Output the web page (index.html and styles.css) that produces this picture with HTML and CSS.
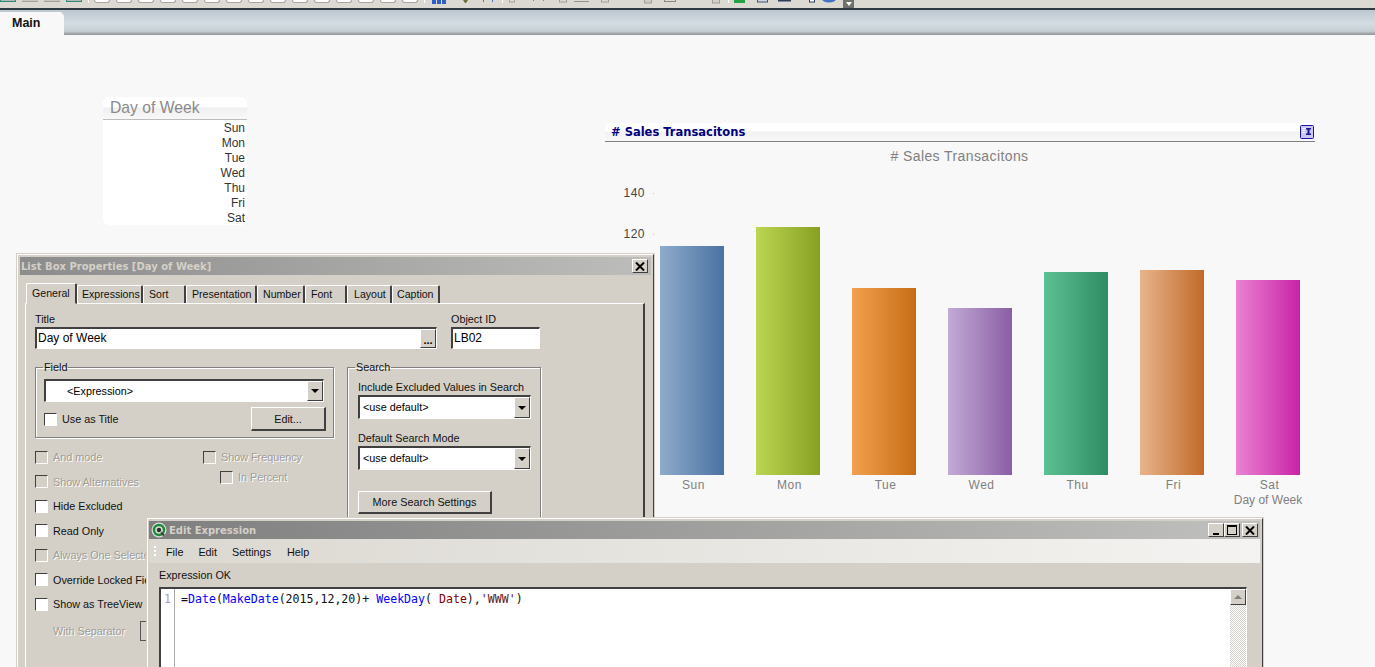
FILE: index.html
```html
<!DOCTYPE html>
<html lang="en">
<head>
<meta charset="utf-8">
<title>QlikView</title>
<link rel="stylesheet" href="styles.css">
</head>
<body>
<div class="toolbar">
  <i class="tb tb-teal"></i><i class="tb tb-gray"></i><i class="tb tb-gray"></i><i class="tb tb-teal"></i><i class="tb-sep"></i>
  <div class="tb-round-group">
    <i class="tb-round"></i><i class="tb-round"></i><i class="tb-round"></i><i class="tb-round"></i><i class="tb-round"></i>
    <i class="tb-round"></i><i class="tb-round"></i><i class="tb-round"></i><i class="tb-round"></i><i class="tb-round"></i>
    <i class="tb-round"></i><i class="tb-round"></i><i class="tb-round"></i><i class="tb-round"></i><i class="tb-round"></i>
  </div>
  <i class="tb-sep"></i>
  <svg class="tb-misc" width="412" height="8" viewBox="0 0 412 8" aria-hidden="true">
    <path d="M1 0h4v4H1zM6 0h4v4H6zM11 0h4v4h-4z" fill="#2f5fc4"/>
    <path d="M32 0h5l-2 3h-1z" fill="#6d6a3c"/>
    <path d="M52 0h1v2h-1zM61 0h1v2h-1z" fill="#4c78c0"/>
    <path d="M71 0h1v3h-1z" fill="#fff"/>
    <rect x="78.500" y="-1" width="5" height="3" fill="none" stroke="#a9a69e"/>
    <path d="M102 0h1v1h-1zM112 0h1v1h-1z" fill="#8a8780"/>
    <rect x="128.500" y="-1" width="7" height="3" fill="none" stroke="#a09d96"/>
    <path d="M143 1h15v1h-15z" fill="#77746e" fill-opacity=".7"/>
    <rect x="170.500" y="-1" width="7" height="3" fill="none" stroke="#a09d96"/>
    <rect x="213.500" y="-1" width="7" height="4" fill="#d0cdc6" stroke="#a09d96"/>
    <path d="M233 0h1v2h-1zM244 0h1v2h-1zM233 1h12v1h-12z" fill="#8a8780"/>
    <rect x="281.500" y="-1" width="7" height="4" fill="#d4d0c8" stroke="#a09d96"/>
    <path d="M297 0h1v3h-1z" fill="#fff"/>
    <rect x="303" y="0" width="11" height="3" fill="#23a345"/>
    <rect x="326.500" y="-1" width="10" height="3" fill="#cfd5dc" stroke="#40556e"/>
    <rect x="347.500" y="-1" width="12" height="2" fill="#2c3f5c" stroke="#2c3f5c"/>
    <rect x="378.500" y="-1" width="5" height="3" fill="#fff" stroke="#29406a"/>
    <ellipse cx="398" cy="-1" rx="7" ry="3.500" fill="#3f73c4"/>
  </svg>
  <div class="tb-more"><i class="tb-more-arrow"></i></div>
</div>
<div class="tabstrip"><div class="tab-main">Main</div></div>

<main class="sheet">
  <section class="listbox">
    <h2 class="listbox-title">Day of Week</h2>
    <ul class="listbox-items">
      <li>Sun</li><li>Mon</li><li>Tue</li><li>Wed</li><li>Thu</li><li>Fri</li><li>Sat</li>
    </ul>
  </section>

  <section class="chart">
    <header class="chart-caption">
      <h2 class="chart-caption-text"># Sales Transacitons</h2>
      <svg class="sigma" width="14" height="14" viewBox="0 0 14 14" aria-hidden="true">
        <rect x=".5" y=".5" width="13" height="13" rx="1" fill="#c9c9ef" stroke="#1a12b0"/>
        <path d="M2 3h4v1H2zM2 5h3v1H2zM2 7h3v1H2z" fill="#f1f1ff"/>
        <path d="M6 3h5v1.500H9.500v4H11V10H6V8.500h1.500v-4H6z" fill="#1a12a0"/>
      </svg>
    </header>
    <h3 class="chart-title"># Sales Transacitons</h3>
    <div class="chart-plot">
      <span class="axis-label axis-140">140</span><i class="axis-dot dot-140"></i>
      <span class="axis-label axis-120">120</span><i class="axis-dot dot-120"></i>
      <div class="bars">
        <div class="bar-col"><div class="bar bar-sun"></div><span class="bar-label">Sun</span></div>
        <div class="bar-col"><div class="bar bar-mon"></div><span class="bar-label">Mon</span></div>
        <div class="bar-col"><div class="bar bar-tue"></div><span class="bar-label">Tue</span></div>
        <div class="bar-col"><div class="bar bar-wed"></div><span class="bar-label">Wed</span></div>
        <div class="bar-col"><div class="bar bar-thu"></div><span class="bar-label">Thu</span></div>
        <div class="bar-col"><div class="bar bar-fri"></div><span class="bar-label">Fri</span></div>
        <div class="bar-col"><div class="bar bar-sat"></div><span class="bar-label">Sat</span></div>
      </div>
      <div class="x-title">Day of Week</div>
    </div>
  </section>
</main>

<section class="win win-props">
  <header class="titlebar titlebar-props">
    <span class="title-text">List Box Properties [Day of Week]</span>
    <span class="cap-btn cap-close"><svg class="x-glyph" width="10" height="9" viewBox="0 0 10 9"><path d="M1 .5l8 8M9 .5l-8 8"/></svg></span>
  </header>
  <div class="tabs">
    <span class="ptab ptab-active w-general">General</span>
    <span class="ptab w-expr">Expressions</span>
    <span class="ptab w-sort">Sort</span>
    <span class="ptab w-pres">Presentation</span>
    <span class="ptab w-num">Number</span>
    <span class="ptab w-font">Font</span>
    <span class="ptab w-layout">Layout</span>
    <span class="ptab w-caption">Caption</span>
  </div>
  <div class="panel">
    <div class="row-title">
      <div class="col-title">
        <label class="lbl">Title</label>
        <div class="sunken title-input"><span class="input-val">Day of Week</span><span class="dots-btn">...</span></div>
      </div>
      <div class="col-objid">
        <label class="lbl">Object ID</label>
        <div class="sunken objid-input"><span class="input-val">LB02</span></div>
      </div>
    </div>
    <div class="row-main">
      <div class="col-left">
        <fieldset class="group group-field">
          <legend>Field</legend>
          <div class="sunken combo combo-field"><span class="combo-val indent">&lt;Expression&gt;</span><span class="combo-btn"><i class="arrow"></i></span></div>
          <div class="field-foot">
            <span class="chk-row"><i class="chk"></i>Use as Title</span>
            <span class="btn btn-edit">Edit...</span>
          </div>
        </fieldset>
        <div class="options">
          <div class="opt-col opt-col-a">
            <span class="chk-row dis"><i class="chk chk-dis"></i>And mode</span>
            <span class="chk-row dis"><i class="chk chk-dis"></i>Show Alternatives</span>
            <span class="chk-row"><i class="chk"></i>Hide Excluded</span>
            <span class="chk-row"><i class="chk"></i>Read Only</span>
            <span class="chk-row dis"><i class="chk chk-dis"></i>Always One Selected Value</span>
            <span class="chk-row"><i class="chk"></i>Override Locked Field</span>
            <span class="chk-row"><i class="chk"></i>Show as TreeView</span>
            <span class="sep-row dis"><span class="sep-label">With Separator</span><i class="sep-input"></i></span>
          </div>
          <div class="opt-col opt-col-b">
            <span class="chk-row dis"><i class="chk chk-dis"></i>Show Frequency</span>
            <span class="chk-row dis sub"><i class="chk chk-dis"></i>In Percent</span>
          </div>
        </div>
      </div>
      <fieldset class="group group-search">
        <legend>Search</legend>
        <div class="lbl">Include Excluded Values in Search</div>
        <div class="sunken combo combo-search"><span class="combo-val">&lt;use default&gt;</span><span class="combo-btn"><i class="arrow"></i></span></div>
        <div class="lbl lbl-mode">Default Search Mode</div>
        <div class="sunken combo combo-search"><span class="combo-val">&lt;use default&gt;</span><span class="combo-btn"><i class="arrow"></i></span></div>
        <span class="btn btn-more">More Search Settings</span>
      </fieldset>
    </div>
  </div>
</section>

<section class="win win-expr">
  <header class="titlebar titlebar-expr">
    <svg class="qv-logo" width="16" height="16" viewBox="0 0 16 16" aria-hidden="true">
      <circle cx="8" cy="8" r="7.500" fill="#d9ddd6"/>
      <circle cx="8" cy="8" r="5" fill="none" stroke="#1f8a3a" stroke-width="2.400"/>
      <circle cx="8" cy="8" r="2.200" fill="#2e2e2e"/>
      <path d="M10 10.500l3 3" stroke="#3d3d3d" stroke-width="2"/>
    </svg>
    <span class="title-text">Edit Expression</span>
    <span class="cap-group">
      <span class="cap-btn"><i class="cap-min"></i></span>
      <span class="cap-btn"><i class="cap-max"></i></span>
      <span class="cap-btn cap-x"><svg class="x-glyph" width="10" height="9" viewBox="0 0 10 9"><path d="M1 .5l8 8M9 .5l-8 8"/></svg></span>
    </span>
  </header>
  <nav class="menubar">
    <i class="grip"></i>
    <span class="menu-item">File</span><span class="menu-item">Edit</span><span class="menu-item">Settings</span><span class="menu-item">Help</span>
  </nav>
  <div class="status">Expression OK</div>
  <div class="editor">
    <div class="gutter">1</div>
    <pre class="code">=<span class="fn">Date</span>(<span class="fn">MakeDate</span>(2015,12,20)+ <span class="fn">WeekDay</span>( <span class="fld">Date</span>),<span class="str">'WWW'</span>)</pre>
    <div class="scrollbar"><span class="scroll-up"><i class="scroll-arrow"></i></span></div>
  </div>
</section>
</body>
</html>
```
FILE: styles.css
```css
* { box-sizing: border-box; }
html, body { margin: 0; height: 100%; overflow: hidden; }
body {
  width: 1375px; height: 667px; overflow: hidden; position: relative;
  background: #f8f8f8; font-family: "Liberation Sans", Arial, sans-serif; font-size: 12px; color: #000;
}
i { display: block; font-style: normal; }
h2, h3, ul { margin: 0; padding: 0; font-weight: normal; list-style: none; }

/* Toolbar, clipped at the top */
.toolbar {
  height: 10px; display: flex; align-items: flex-start; overflow: hidden;
  background: #dcd9d2; border-bottom: 2px solid; border-image: linear-gradient(#8f9091 50%, #2d3a42 50%) 2;
}
.tb { width: 16px; height: 2px; margin-right: 6px; }
.tb-teal { background: #b5b6ae; border: 1px solid #2a8a80; border-top: 0; }
.tb-gray { background: #c9c6bf; border-bottom: 1px solid #a5a29b; }
.tb-sep { width: 1px; height: 3px; background: #fff; margin-right: 5px; }
.tb-round-group { display: flex; gap: 6px; margin-right: 6px; }
.tb-round { width: 16px; height: 3px; background: #fff; border: 1px solid #a9a7a0; border-top: 0; border-radius: 0 0 5px 5px; }
.tb-misc { flex: none; margin-left: 1px; }
.tb-more { position: absolute; left: 843px; top: 0; width: 11px; height: 8px; background: #6f6f6c; }
.tb-more-arrow { width: 0; height: 0; margin: 2px auto 0; border: 3.500px solid transparent; border-top: 4px solid #fff; border-bottom: 0; }

.tabstrip {
  height: 25px; display: flex; align-items: flex-end;
  background: linear-gradient(#bcc8d0, #d4dde3 55%, #c5ced3 85%, #8f9294);
}
.tab-main {
  width: 64px; height: 23px; padding: 4px 0 0 12px; background: #f8f8f8; border-radius: 0 5px 0 0;
  font: bold 12.500px "Liberation Sans", Arial, sans-serif; color: #111;
}

/* Sheet objects sit on a free canvas */
.sheet { position: absolute; inset: 35px 0 0 0; }
.listbox { position: absolute; left: 103px; top: 62px; width: 144px; height: 128px; background: #fff; border-radius: 6px; overflow: hidden; }
.listbox-title {
  height: 23px; padding: 1px 0 0 7px; border-bottom: 1px solid #bdbdbd;
  background: linear-gradient(#fff 10px, #f0f0f0 11px, #f8f8f8);
  font-size: 15.700px; line-height: 20px; color: #8a8a8a;
}
.listbox-items { padding-top: 1px; }
.listbox-items li { height: 15px; line-height: 15px; padding-right: 2px; text-align: right; color: #333; font-size: 12px; }

.chart { position: absolute; left: 605px; top: 88px; width: 710px; }
.chart-caption {
  height: 19px; display: flex; align-items: center; justify-content: space-between; padding: 0 1px 0 6px;
  border-bottom: 1px solid #808080; border-top-left-radius: 6px;
  background: linear-gradient(#fff 8px, #f2f2f2 9px, #f8f8f8);
}
.chart-caption-text { font: bold 11.500px "DejaVu Sans", sans-serif; color: #000080; }
.sigma { flex: none; }
.chart-title { text-align: center; font-size: 14px; line-height: 16px; margin: 6px 0 1px -1px; color: #808080; letter-spacing: .4px; }
.chart-plot { position: relative; height: 340px; }
.axis-label { position: absolute; left: 18px; width: 22px; text-align: right; font-size: 12px; line-height: 14px; color: #444; letter-spacing: .5px; }
.axis-140 { top: 21px; }
.axis-120 { top: 62px; }
.axis-dot { position: absolute; left: 48px; width: 1px; height: 1px; background: #c4c4c4; }
.dot-140 { top: 28px; }
.dot-120 { top: 69px; }
.bars { position: absolute; left: 55px; top: 0; height: 328px; display: flex; gap: 32px; align-items: flex-end; }
.bar-col { width: 64px; display: flex; flex-direction: column; align-items: center; }
.bar { width: 64px; }
.bar-label { height: 18px; line-height: 20px; padding-left: 3px; font-size: 12px; color: #808080; letter-spacing: .5px; }
.bar-sun { height: 229px; background: linear-gradient(90deg, #8eabcb, #4a72a2); }
.bar-mon { height: 248px; background: linear-gradient(90deg, #bcd652, #87a024); }
.bar-tue { height: 187px; background: linear-gradient(90deg, #f2a14f, #c76c15); }
.bar-wed { height: 167px; background: linear-gradient(90deg, #c2aad6, #8a5ea4); }
.bar-thu { height: 203px; background: linear-gradient(90deg, #5cc093, #2f8d63); }
.bar-fri { height: 205px; background: linear-gradient(90deg, #e8b48c, #c26a28); }
.bar-sat { height: 195px; background: linear-gradient(90deg, #ea82d2, #c823a6); }
.x-title { position: absolute; left: 600px; top: 328px; width: 126px; text-align: center; font-size: 12px; line-height: 14px; color: #808080; }

/* Floating windows */
.win { position: absolute; background: #d4d0c8; border: 1px solid #fff; border-bottom: 0; overflow: hidden; box-shadow: 0 0 0 1px #d4d0c8; }
.titlebar { display: flex; align-items: center; height: 18px; color: #d4d0c8; font: bold 10px "DejaVu Sans", sans-serif; }
.title-text { white-space: nowrap; }
.cap-btn {
  width: 16px; height: 14px; display: flex; align-items: center; justify-content: center; background: #d4d0c8;
  border: 1px solid; border-color: #fff #404040 #404040 #fff;
}
.x-glyph path { fill: none; stroke: #000; stroke-width: 2; }

.win-props { left: 17px; top: 254px; width: 637px; height: 413px; padding: 2px 2px 0 2px; border-right-color: #404040; }
.titlebar-props { padding: 0 3px 0 1px; justify-content: space-between; background: linear-gradient(90deg, #8c8c8c, #bdbdbb); }
.tabs { display: flex; align-items: flex-end; height: 28px; padding: 0 0 0 6px; position: relative; z-index: 1; }
.ptab {
  height: 18px; padding: 2px 0 0 5px; border: 1px solid #fff; border-right: 2px solid #404040; border-bottom: 0; border-radius: 2px 2px 0 0;
  background: #d4d0c8; font-size: 10.600px; line-height: 13px; color: #111; white-space: nowrap;
}
.ptab-active { height: 21px; padding: 3px 0 0 5px; border-bottom: 1px solid #d4d0c8; margin-bottom: -1px; }
.w-general { width: 51px; }
.w-expr { width: 66px; padding-left: 4px; }
.w-sort { width: 43px; }
.w-pres { width: 71px; }
.w-num { width: 48px; }
.w-font { width: 42px; }
.w-layout { width: 45px; padding-left: 6px; }
.w-caption { width: 48px; padding-left: 4px; }
.panel { margin-left: 5px; width: 620px; height: 400px; border: 1px solid; border-color: #fff #404040 #404040 #fff; border-right-width: 2px; padding: 7px 9px; }
.lbl { display: block; font-size: 10.800px; line-height: 16px; color: #111; }
.row-title { display: flex; gap: 14px; }
.col-title { width: 402px; }
.col-objid { width: 89px; }
.sunken { background: #fff; border: 1px solid; border-color: #404040 #fff #fff #404040; border-width: 2px 1px 1px 2px; }
.title-input { height: 22px; display: flex; justify-content: space-between; }
.objid-input { height: 22px; }
.input-val { padding-left: 1px; line-height: 18px; font-size: 12px; }
.dots-btn { width: 16px; height: 19px; background: #d4d0c8; border: 1px solid; border-color: #fff #404040 #404040 #fff; text-align: center; line-height: 20px; font-weight: bold; font-size: 11px; }
.row-main { display: flex; gap: 13px; margin-top: 11px; }
.col-left { width: 299px; position: relative; }
fieldset { margin: 0; min-width: 0; }
.group { border: 1px solid #808080; box-shadow: 1px 1px 0 #fff, inset 1px 1px 0 #fff; padding: 0; }
.group legend { padding: 0 1px; font-size: 10.800px; line-height: 14px; color: #111; }
.group-field legend { margin-left: -1px; }
.group-search legend { margin-left: -3px; }
.group-field { width: 299px; height: 78px; padding: 5px 8px 0 8px; }
.combo { display: flex; justify-content: space-between; }
.combo-field { height: 23px; width: 280px; }
.combo-val { font-size: 10.800px; line-height: 20px; padding-left: 4px; }
.indent { padding-left: 21px; }
.combo-btn { width: 16px; background: #d4d0c8; border: 1px solid; border-color: #fff #404040 #404040 #fff; display: flex; align-items: center; justify-content: center; }
.arrow { width: 0; height: 0; border: 4px solid transparent; border-top: 4px solid #000; border-bottom: 0; }
.field-foot { display: flex; justify-content: space-between; align-items: center; margin-top: 5px; width: 282px; }
.chk-row { display: flex; align-items: center; gap: 5px; height: 16px; font-size: 10.800px; color: #111; white-space: nowrap; }
.opt-col-a .chk-row { width: 111px; overflow: hidden; }
.chk { width: 13px; height: 13px; background: #fff; border: 1px solid; border-color: #404040 #fff #fff #404040; flex: none; }
.chk-dis { background: #d4d0c8; }
.dis { color: #a09d96; text-shadow: 1px 1px 0 #fff; }
.btn { display: flex; align-items: center; justify-content: center; background: #d4d0c8; border: 1px solid; border-color: #fff #404040 #404040 #fff; border-width: 1px 2px 2px 1px; font-size: 10.800px; color: #111; }
.btn-edit { width: 75px; height: 24px; }
.options { position: relative; padding-top: 11px; height: 260px; }
.opt-col-a { display: flex; flex-direction: column; gap: 8.500px; }
.opt-col-b { position: absolute; left: 168px; top: 11px; display: flex; flex-direction: column; gap: 4px; }
.sub { margin-left: 17px; }
.sep-row { display: flex; align-items: center; margin: 0 0 0 18px; font-size: 10.800px; white-space: nowrap; height: 20px; }
.sep-label { width: 87px; }
.sep-input { width: 20px; height: 20px; border: 1px solid #555; flex: none; }
.group-search { width: 194px; height: 200px; padding: 5px 9px 0 10px; }
.combo-search { width: 173px; height: 24px; }
.combo-search .combo-val { padding-left: 3px; }
.lbl-mode { margin-top: 11px; }
.btn-more { width: 134px; height: 23px; margin-top: 21px; }

.win-expr { left: 147px; top: 518px; width: 1116px; height: 149px; padding: 2px 2px 0 1px; border-right-color: #404040; }
.titlebar-expr { padding-left: 2px; gap: 2px; background: linear-gradient(90deg, #7f7f7f, #c0c0be); position: relative; }
.qv-logo { flex: none; }
.cap-group { margin-left: auto; display: flex; align-items: center; margin-right: 2px; }
.cap-x { margin-left: 2px; }
.cap-min { width: 6px; height: 2px; background: #000; margin-top: 8px; }
.cap-max { width: 10px; height: 10px; border: 1px solid #000; border-top-width: 2px; }
.menubar { height: 24px; padding-top: 1px; display: flex; align-items: center; background: linear-gradient(90deg, #dbd8d1, #f4f3f1); font-size: 10.800px; color: #111; }
.grip { width: 2px; height: 11px; margin: 0 8px 0 5px; background: repeating-linear-gradient(#fff 0 2px, transparent 2px 4px); }
.menu-item { margin-right: 15px; }
.menu-item:first-of-type { margin-left: 2px; }
.menu-item:nth-of-type(3) { margin-right: 16px; }
.status { height: 24px; padding: 5px 0 0 10px; font-size: 10.800px; line-height: 14px; color: #111; }
.editor { margin-left: 10px; width: 1088px; height: 100px; display: flex; background: #fff; border: 1px solid; border-color: #404040 #fff #fff #404040; border-width: 2px 1px 0 2px; }
.gutter { width: 14px; border-right: 1px solid #a9a9a9; padding-left: 3px; font: 11.580px/20px "DejaVu Sans Mono", monospace; color: #a99cb0; flex: none; }
.code { margin: 0 0 0 6px; padding-top: 1px; flex: 1; font: 11.580px/19px "DejaVu Sans Mono", monospace; color: #111; }
.fn { color: #0000ff; }
.fld { color: #800000; }
.str { color: #5a2020; }
.scrollbar { width: 16px; background: repeating-conic-gradient(#d4d0c8 0 25%, #fff 0 50%) 0 0 / 2px 2px; }
.scroll-up { display: flex; align-items: center; justify-content: center; height: 16px; background: #d4d0c8; border: 1px solid; border-color: #fff #404040 #404040 #fff; }
.scroll-arrow { width: 0; height: 0; border: 4px solid transparent; border-bottom: 4px solid #808080; border-top: 0; }
```
